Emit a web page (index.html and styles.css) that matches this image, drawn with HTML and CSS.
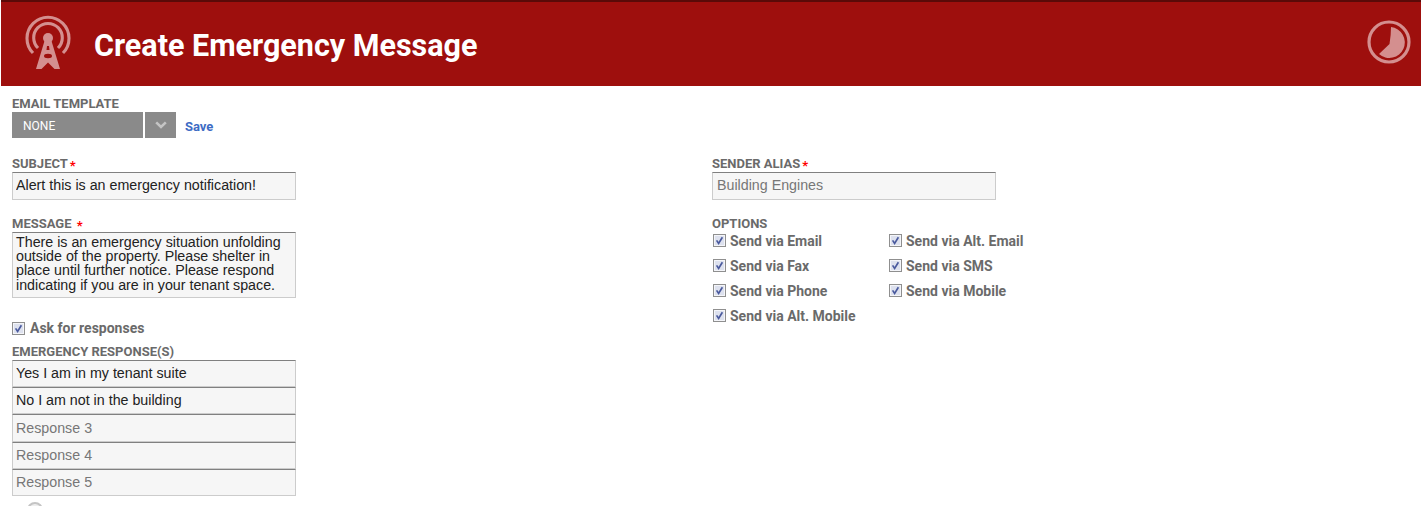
FILE: index.html
```html
<!DOCTYPE html>
<html lang="en">
<head>
  <meta charset="UTF-8" />
  <title>Create Emergency Message</title>
  <link rel="stylesheet" href="styles.css">
</head>
<body>
  <svg class="defs" width="0" height="0">
    <symbol id="check" viewBox="0 0 13 13">
      <rect x="0.5" y="0.5" width="12" height="12" fill="#e4e8f2" stroke="#8f8f8f"/>
      <rect x="1.5" y="1.5" width="10" height="10" fill="#dde1ee" stroke="#f4f5f9"/>
      <path d="M3.6 6.4 L5.6 9.4 L9.4 3.2" fill="none" stroke="#4a5a9e" stroke-width="1.7"/>
    </symbol>
  </svg>

  <header class="banner">
    <svg class="tower" viewBox="0 0 48 56" width="48" height="56">
      <g fill="none" stroke="#d48f8f" stroke-width="3.1">
        <path d="M14 33 A 14.3 14.3 0 1 1 34 33"/>
        <path d="M9 38 A 21 21 0 1 1 39 38"/>
      </g>
      <circle cx="24" cy="23" r="5" fill="#d48f8f"/>
      <path d="M20.5 26 H27.5 L36 54 H30.5 L24 47.5 L17.5 54 H12 Z M23 31 H25 L25.5 35 H22.5 Z M20 41 A4 2.2 0 1 0 28 41 A4 2.2 0 1 0 20 41 Z" fill="#d48f8f" fill-rule="evenodd"/>
    </svg>
    <h1>Create Emergency Message</h1>
    <svg class="clock" viewBox="0 0 44 44" width="44" height="44">
      <circle cx="22" cy="22" r="20" fill="none" stroke="#d48f8f" stroke-width="3.2"/>
      <path d="M24 7 A 15.5 15.5 0 1 1 12 34 L22.5 24 Q24 15 24 7 Z" fill="#d48f8f"/>
    </svg>
  </header>

  <form class="form">
    <div class="template">
      <label class="field-label">Email Template</label>
      <div class="template-row">
        <div class="select-value">NONE</div>
        <div class="select-arrow">
          <svg viewBox="0 0 12 8" width="12" height="8"><path d="M1.2 1.4 L6 6 L10.8 1.4" fill="none" stroke="#c4c4c4" stroke-width="2.6"/></svg>
        </div>
        <a class="save" href="#">Save</a>
      </div>
    </div>

    <div class="columns">
      <div class="col">
        <label class="field-label">Subject<span class="req">*</span></label>
        <input class="text-input" type="text" value="Alert this is an emergency notification!">

        <label class="field-label message-label">Message <span class="req">*</span></label>
        <textarea class="text-area">There is an emergency situation unfolding outside of the property. Please shelter in place until further notice. Please respond indicating if you are in your tenant space.</textarea>

        <label class="check-row ask"><svg class="check"><use href="#check"/></svg>Ask for responses</label>

        <label class="field-label">Emergency Response(s)</label>
        <div class="responses">
          <input class="text-input" type="text" value="Yes I am in my tenant suite">
          <input class="text-input" type="text" value="No I am not in the building">
          <input class="text-input" type="text" placeholder="Response 3">
          <input class="text-input" type="text" placeholder="Response 4">
          <input class="text-input" type="text" placeholder="Response 5">
        </div>
        <div class="add-icon"></div>
      </div>

      <div class="col">
        <label class="field-label">Sender Alias<span class="req">*</span></label>
        <input class="text-input alias" type="text" placeholder="Building Engines">

        <label class="field-label options-label">Options</label>
        <div class="options">
          <label class="check-row"><svg class="check"><use href="#check"/></svg>Send via Email</label>
          <label class="check-row"><svg class="check"><use href="#check"/></svg>Send via Alt. Email</label>
          <label class="check-row"><svg class="check"><use href="#check"/></svg>Send via Fax</label>
          <label class="check-row"><svg class="check"><use href="#check"/></svg>Send via SMS</label>
          <label class="check-row"><svg class="check"><use href="#check"/></svg>Send via Phone</label>
          <label class="check-row"><svg class="check"><use href="#check"/></svg>Send via Mobile</label>
          <label class="check-row"><svg class="check"><use href="#check"/></svg>Send via Alt. Mobile</label>
        </div>
      </div>
    </div>
  </form>
</body>
</html>
```

FILE: styles.css
```css
html, body {
  height: 100%;
  overflow: hidden;
}

body {
  margin: 0;
  background-color: #fff;
  font-family: 'Roboto', sans-serif;
  color: #666;
}

.defs {
  display: block;
  height: 0;
}

.banner {
  display: flex;
  align-items: center;
  box-sizing: border-box;
  height: 86px;
  margin-left: 1px;
  padding: 0 2px 0 23px;
  background-color: #9e0f0d;
  border-top: 2px solid #5a0a08;
}

.tower {
  flex: none;
  margin-top: -2px;
}

.banner h1 {
  flex: 1;
  margin: 3px 0 0 22px;
  font-size: 30.5px;
  font-weight: 700;
  color: #fff;
}

.clock {
  flex: none;
  margin-top: -4px;
  margin-right: 8px;
}

.form {
  padding: 11px 12px 0;
}

.field-label {
  display: block;
  font-size: 13px;
  line-height: 14px;
  font-weight: 700;
  text-transform: uppercase;
  color: #6a6a6a;
}

.req {
  margin-left: 2px;
  color: #f00;
  font-size: 13px;
  line-height: 10px;
  vertical-align: -2px;
}

.template-row {
  display: flex;
  align-items: center;
  height: 26px;
  margin-top: 1px;
}

.select-value {
  box-sizing: border-box;
  width: 131px;
  height: 26px;
  padding-left: 11px;
  background-color: #8a8a8a;
  color: #fff;
  font-size: 12px;
  line-height: 28px;
}

.select-arrow {
  display: flex;
  align-items: center;
  justify-content: center;
  width: 31px;
  height: 26px;
  margin-left: 2px;
  background-color: #8a8a8a;
}

.save {
  margin: 2px 0 0 9px;
  color: #3d6cc4;
  font-size: 13px;
  font-weight: 700;
  text-decoration: none;
}

.columns {
  display: grid;
  grid-template-columns: 700px 1fr;
  margin-top: 19px;
}

.text-input,
.text-area {
  display: block;
  box-sizing: border-box;
  width: 284px;
  margin: 1px 0 0;
  padding: 0 3px;
  background-color: #f6f6f6;
  border: 1px solid #ccc;
  border-top: 1px solid #808080;
  border-radius: 0;
  outline: none;
  font-family: 'Liberation Sans', sans-serif;
  font-size: 14.25px;
  color: #222;
}

.text-input {
  height: 28px;
  padding-bottom: 2px;
}

.text-input::placeholder {
  color: #777;
  opacity: 1;
}

.alias {
  padding-left: 4px;
}

.text-area {
  height: 66px;
  padding: 1.5px 3px 0;
  line-height: 14.4px;
  resize: none;
  overflow: hidden;
}

.message-label {
  margin-top: 17px;
}

.ask {
  margin-top: 22px;
  margin-bottom: 9px;
}

.check-row {
  display: flex;
  align-items: center;
  font-size: 14px;
  line-height: 16px;
  font-weight: 700;
  color: #6a6a6a;
}

.check {
  flex: none;
  width: 13px;
  height: 13px;
  margin-right: 5px;
}

.responses {
  margin-top: 1px;
}

.responses .text-input {
  margin: 0;
  height: 27.2px;
}

.responses .text-input:placeholder-shown {
  padding-bottom: 0;
}

.add-icon {
  width: 16px;
  height: 16px;
  margin: 6px 0 0 15px;
  box-sizing: border-box;
  background-color: #eee;
  border: 2px solid #c4c4c4;
  border-radius: 50%;
}

.options-label {
  margin-top: 17px;
}

.options {
  display: grid;
  grid-template-columns: 176px 176px;
  grid-auto-rows: 25px;
  width: 352px;
  margin-top: -3px;
  padding-left: 1px;
}

.options .check {
  margin-right: 4px;
}
```
